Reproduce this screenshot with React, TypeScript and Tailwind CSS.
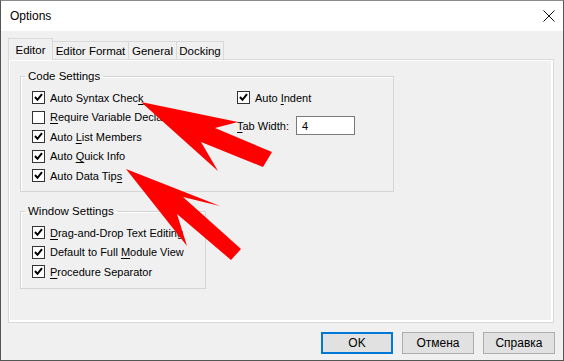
import React from 'react';

const font = { fontFamily: '"Liberation Sans", Arial, sans-serif' };

const Check = ({ checked }: { checked: boolean }) => (
    <span className="w-[13px] h-[13px] border border-[#333333] bg-white flex items-center justify-center shrink-0">
        {checked && (
            <svg width="9" height="9" viewBox="0 0 9 9">
                <path d="M1 4 L3.5 6.8 L8 1.2" stroke="#000" strokeWidth="2" fill="none" />
            </svg>
        )}
    </span>
);

// label with one underlined access key
const Label = ({ text, k }: { text: string; k: number }) => (
    <span className="whitespace-nowrap">
        {text.slice(0, k)}
        <span className="underline underline-offset-2">{text[k]}</span>
        {text.slice(k + 1)}
    </span>
);

const Row = ({ text, k, checked = true }: { text: string; k: number; checked?: boolean }) => (
    <div className="h-[19.5px] flex items-center gap-[5px]">
        <Check checked={checked} />
        <Label text={text} k={k} />
    </div>
);

const Button = ({ label, primary }: { label: string; primary?: boolean }) => (
    <button
        className={
            'w-[72px] h-[22px] bg-[#e1e1e1] text-black text-[12px] ' +
            (primary ? 'border-2 border-[#0078d7]' : 'border border-[#adadad]')
        }
    >
        {label}
    </button>
);

const App: React.FC = () => {
    return (
        <div className="w-[564px] h-[361px] relative flex flex-col border border-[#555555] border-t-[#8a8a8a] text-black text-[11px] leading-[16px] overflow-hidden" style={font}>
            {/* title bar */}
            <div className="h-[30px] bg-white flex items-center justify-between pl-[9px] pr-[8px] shrink-0">
                <span className="text-[12px]">Options</span>
                <svg width="12" height="12" viewBox="0 0 12 12">
                    <path d="M0.5 0.5 L11.5 11.5 M11.5 0.5 L0.5 11.5" stroke="#111" strokeWidth="1" />
                </svg>
            </div>

            <div className="flex-1 bg-[#f0f0f0] flex flex-col pt-[7px] px-[7px]">
                {/* tabs */}
                <div className="flex items-start h-[21px] relative z-10 text-[11.5px]">
                    <div className="w-[45px] h-[22px] border border-b-0 border-[#d9d9d9] bg-[#f0f0f0] flex items-center justify-center">Editor</div>
                    <div className="w-[76px] h-[18px] mt-[3px] border border-l-0 border-b-0 border-[#d9d9d9] flex items-center justify-center">Editor Format</div>
                    <div className="w-[48px] h-[18px] mt-[3px] border border-l-0 border-b-0 border-[#d9d9d9] flex items-center justify-center">General</div>
                    <div className="w-[47px] h-[18px] mt-[3px] border border-l-0 border-b-0 border-[#d9d9d9] flex items-center justify-center">Docking</div>
                </div>

                {/* tab panel */}
                <div className="w-[546px] h-[264px] border border-[#d9d9d9] shadow-[inset_1px_1px_0_#ffffff,inset_-2px_-2px_0_#ffffff] pl-[11px] pt-[8px]">
                    <fieldset className="w-[374px] h-[124px] min-w-0 border border-[#d5d5d5] shadow-[inset_1px_1px_0_#ffffff]">
                        <legend className="px-[3px] ml-[4px] text-[11.5px]">Code Settings</legend>
                        <div className="flex pt-[4px] pl-[11px]">
                            <div className="w-[205px] flex flex-col">
                                <Row text="Auto Syntax Check" k={16} />
                                <Row text="Require Variable Declaration" k={0} checked={false} />
                                <Row text="Auto List Members" k={5} />
                                <Row text="Auto Quick Info" k={5} />
                                <Row text="Auto Data Tips" k={13} />
                            </div>
                            <div className="flex flex-col">
                                <Row text="Auto Indent" k={5} />
                                <div className="h-[20px] mt-[8px] flex items-center">
                                    <span className="w-[59px]"><Label text="Tab Width:" k={0} /></span>
                                    <div className="w-[59px] h-[19px] border border-[#7a7a7a] bg-white pl-[5px] flex items-center">4</div>
                                </div>
                            </div>
                        </div>
                    </fieldset>

                    <fieldset className="w-[186px] h-[86px] min-w-0 mt-[11px] border border-[#d5d5d5] shadow-[inset_1px_1px_0_#ffffff]">
                        <legend className="px-[3px] ml-[4px] text-[11.5px]">Window Settings</legend>
                        <div className="flex flex-col pt-[4px] pl-[11px]">
                            <Row text="Drag-and-Drop Text Editing" k={0} />
                            <Row text="Default to Full Module View" k={16} />
                            <Row text="Procedure Separator" k={0} />
                        </div>
                    </fieldset>
                </div>

                {/* buttons */}
                <div className="flex justify-end gap-[9px] mt-[9px] pr-[1px]">
                    <Button label="OK" primary />
                    <Button label="Отмена" />
                    <Button label="Справка" />
                </div>
            </div>

            {/* red arrows drawn over the dialog */}
            <svg className="absolute left-0 top-0 pointer-events-none" width="564" height="361" viewBox="0 0 564 361">
                <polygon points="140,101 237,121 214,127 271,151 262,166 200,141 217,170" fill="#ff0000" />
                <polygon points="125,168 219,205 182,196 240,248 230,259 176,213 186,245" fill="#ff0000" />
            </svg>
        </div>
    );
};

export default App;
